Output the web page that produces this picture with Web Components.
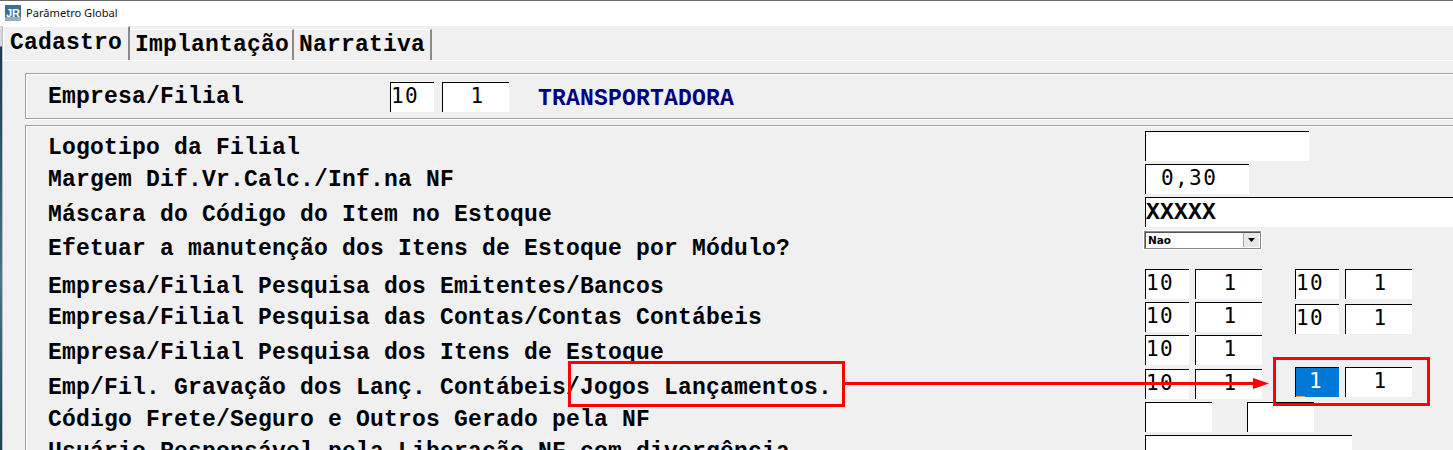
<!DOCTYPE html>
<html lang="pt">
<head>
<meta charset="utf-8">
<title>Parâmetro Global</title>
<style>
  html, body { margin: 0; height: 450px; overflow: hidden; background: #f0f0f0; }
  body { position: relative; font-family: "Liberation Mono", monospace; }
</style>
</head>
<body>

<param-window heading="Parâmetro Global">
  <tab-strip>
    <tab-item active style="width:127px">Cadastro</tab-item>
    <tab-item style="width:164px">Implantação</tab-item>
    <tab-item style="width:138px">Narrativa</tab-item>
  </tab-strip>

  <group-box style="--box-top:12px;--box-h:46px">
    <form-row label="Empresa/Filial" style="--row-h:36px;--col:342px;--field-top:8px;--label-top:12px">
      <text-field w="44" align="left">10</text-field>
      <text-field w="67" gap="8">1</text-field>
      <span style="margin-left:29px;margin-top:6px;color:#000080;font:bold 23px/1 'Liberation Mono',monospace;letter-spacing:.2px">TRANSPORTADORA</span>
    </form-row>
  </group-box>

  <group-box style="--box-top:6px;--box-h:340px">
    <form-row label="Logotipo da Filial" style="--row-h:33px;--label-top:11px;--field-top:5px">
      <text-field w="164"></text-field>
    </form-row>
    <form-row label="Margem Dif.Vr.Calc./Inf.na NF" style="--row-h:33px;--label-top:10px;--field-top:5px">
      <text-field w="104" pad="15">0,30</text-field>
    </form-row>
    <form-row label="Máscara do Código do Item no Estoque" style="--row-h:34px;--label-top:12px;--field-top:5px">
      <text-field w="320" align="left" bold>XXXXX</text-field>
    </form-row>
    <form-row label="Efetuar a manutenção dos Itens de Estoque por Módulo?" style="--row-h:38px;--label-top:12px;--field-top:4px">
      <combo-box>Nao</combo-box>
    </form-row>
    <form-row label="Empresa/Filial Pesquisa dos Emitentes/Bancos" style="--row-h:33px;--label-top:12px;--field-top:5px">
      <text-field w="44" align="left">10</text-field>
      <text-field w="67" gap="6">1</text-field>
      <text-field w="44" gap="33" align="left">10</text-field>
      <text-field w="67" gap="6">1</text-field>
    </form-row>
    <form-row label="Empresa/Filial Pesquisa das Contas/Contas Contábeis" style="--row-h:33px;--label-top:10px;--field-top:5px">
      <text-field w="44" align="left">10</text-field>
      <text-field w="67" gap="6">1</text-field>
      <text-field w="44" gap="33" drop="2" align="left">10</text-field>
      <text-field w="67" gap="6" drop="2">1</text-field>
    </form-row>
    <form-row label="Empresa/Filial Pesquisa dos Itens de Estoque" style="--row-h:34px;--label-top:12px;--field-top:5px">
      <text-field w="44" align="left">10</text-field>
      <text-field w="67" gap="6">1</text-field>
    </form-row>
    <form-row label="Emp/Fil. Gravação dos Lanç. Contábeis/Jogos Lançamentos." style="--row-h:33px;--label-top:13px;--field-top:5px">
      <text-field w="44" align="left">10</text-field>
      <text-field w="67" gap="6">1</text-field>
      <text-field w="44" gap="33" drop="-2" selected>1</text-field>
      <text-field w="67" gap="6" drop="-2">1</text-field>
    </form-row>
    <form-row label="Código Frete/Seguro e Outros Gerado pela NF" style="--row-h:33px;--label-top:12px;--field-top:5px">
      <text-field w="67"></text-field>
      <text-field w="67" gap="35"></text-field>
    </form-row>
    <form-row label="Usuário Responsável pela Liberação NF com divergência" style="--row-h:33px;--label-top:11px;--field-top:5px">
      <text-field w="207"></text-field>
    </form-row>
  </group-box>
</param-window>

<red-callout></red-callout>

<script>
class ParamWindow extends HTMLElement {
  connectedCallback() {
    this.attachShadow({ mode: 'open' });
    const heading = this.getAttribute('heading') || '';
    this.shadowRoot.innerHTML = `
      <style>
        :host { display: block; height: 450px; overflow: hidden; background: #f0f0f0; border-top: 1px solid #6b6b6b; box-sizing: border-box; position: relative; }
        .titlebar { box-sizing: border-box; height: 25px; padding: 0 0 2px 5px; background: #fff; display: flex; align-items: center; gap: 5px; font: 11.1px/1 "Noto Sans", "Open Sans", sans-serif; color: #111; }
        .logo { width: 16px; height: 16px; flex: none; display: block; }
        .edge { position: absolute; left: 0; top: 25px; bottom: 0; width: 2px; background: linear-gradient(#d8d8d8 0, #d8d8d8 20px, #1d3a4c 21px, #4b7486 60%, #20404f); }
        .edge-line { position: absolute; left: 2px; top: 25px; bottom: 0; width: 1px; background: #bdbdbd; }
        .content { padding-left: 25px; }
      </style>
      <div class="titlebar">
        <svg class="logo" viewBox="0 0 16 16">
          <rect width="16" height="16" fill="#3f6f8c"/>
          <rect y="12" width="16" height="4" fill="#8fb0c2"/>
          <text x="8" y="11.5" text-anchor="middle" font-family="Liberation Sans, sans-serif" font-weight="bold" font-size="11" fill="#fff">JR</text>
        </svg>
        <span>${heading}</span>
      </div>
      <div class="edge"></div><div class="edge-line"></div>
      <div class="content"><slot></slot></div>
    `;
  }
}

class TabStrip extends HTMLElement {
  connectedCallback() {
    this.attachShadow({ mode: 'open' });
    this.shadowRoot.innerHTML = `
      <style>
        :host { display: flex; align-items: flex-end; height: 34px; margin-left: -22px; border-bottom: 1px solid #fff; }
      </style>
      <slot></slot>
    `;
  }
}

class TabItem extends HTMLElement {
  connectedCallback() {
    this.attachShadow({ mode: 'open' });
    this.shadowRoot.innerHTML = `
      <style>
        :host { display: block; flex: none; box-sizing: border-box; height: 31px; padding: 4px 0 0 5px; font: bold 23px/1 "Liberation Mono", monospace; letter-spacing: .2px; color: #000; white-space: nowrap; background: #f0f0f0; border-top: 1px solid #fff; border-right: 2px solid #8a8a8a; }
        :host([active]) { height: 34px; padding: 5px 0 0 6px; border-left: 1px solid #fff; }
      </style>
      <slot></slot>
    `;
  }
}

class GroupBox extends HTMLElement {
  connectedCallback() {
    this.attachShadow({ mode: 'open' });
    this.shadowRoot.innerHTML = `
      <style>
        :host { display: block; box-sizing: border-box; margin-top: var(--box-top); height: var(--box-h); border: 1px solid #a0a0a0; border-right: 0; box-shadow: inset 1px 1px 0 #fff, 0 1px 0 #fff; }
      </style>
      <slot></slot>
    `;
  }
}

class FormRow extends HTMLElement {
  connectedCallback() {
    this.attachShadow({ mode: 'open' });
    const label = this.getAttribute('label') || '';
    this.shadowRoot.innerHTML = `
      <style>
        :host { display: grid; grid-template-columns: var(--col, 1097px) 1fr; height: var(--row-h); padding-left: 22px; }
        .label { margin-top: var(--label-top, 8px); font: bold 23px/1 "Liberation Mono", monospace; letter-spacing: .2px; color: #000; white-space: nowrap; }
        .fields { display: flex; align-items: flex-start; margin-top: var(--field-top, 5px); }
      </style>
      <div class="label">${label}</div>
      <div class="fields"><slot></slot></div>
    `;
  }
}

class TextField extends HTMLElement {
  connectedCallback() {
    this.attachShadow({ mode: 'open' });
    const w = this.getAttribute('w') || 44;
    const gap = this.getAttribute('gap') || 0;
    const drop = this.getAttribute('drop') || 0;
    const pad = this.getAttribute('pad');
    const align = pad ? 'left' : (this.getAttribute('align') || 'center');
    const left = pad || (align === 'left' ? 0 : 3);
    this.shadowRoot.innerHTML = `
      <style>
        :host { display: block; flex: none; box-sizing: border-box; position: relative; width: ${w}px; height: 30px; margin-left: ${gap}px; margin-top: ${drop}px; background: #fff; border-top: 1px solid #000; border-left: 1px solid #000; padding: 2px 0 0 ${left}px; text-align: ${align}; font: 21px/1.1 "DejaVu Sans Mono", monospace; letter-spacing: 1.4px; color: #000; overflow: hidden; white-space: nowrap; }
        :host([bold]) { font: bold 23px/1.05 "Liberation Mono", monospace; letter-spacing: .2px; padding: 3px 0 0; }
        :host([selected]) { background: #0078d7; color: #fff; padding: 2px 3px 0 0; }
        :host([selected])::after { content: ""; position: absolute; left: 0; bottom: 0; width: 9px; height: 1px; background: #e8a060; }
      </style>
      <slot></slot>
    `;
  }
}

class ComboBox extends HTMLElement {
  connectedCallback() {
    this.attachShadow({ mode: 'open' });
    this.shadowRoot.innerHTML = `
      <style>
        :host { display: flex; box-sizing: border-box; width: 119px; height: 20px; margin-left: -2px; background: #fff; border: 1px solid #fff; box-shadow: inset 1px 1px 0 #8a8a8a, inset -1px -1px 0 #8a8a8a, inset 2px 2px 0 #555; padding: 2px 2px 2px 4px; justify-content: space-between; font: bold 10.5px/14px "DejaVu Sans", sans-serif; color: #000; }
        .btn { width: 15px; height: 14px; background: #e8e8e8; border-left: 1px solid #aaa; display: flex; align-items: center; justify-content: center; }
        svg { width: 7px; height: 4px; display: block; }
      </style>
      <span><slot></slot></span>
      <span class="btn"><svg viewBox="0 0 7 4"><path d="M0 0h7L3.5 4z" fill="#000"/></svg></span>
    `;
  }
}

// red annotations lie over the form
class RedCallout extends HTMLElement {
  connectedCallback() {
    this.attachShadow({ mode: 'open' });
    this.shadowRoot.innerHTML = `
      <style>
        :host { position: absolute; left: 0; top: 0; width: 1453px; height: 450px; pointer-events: none; }
        svg { display: block; }
      </style>
      <svg width="1453" height="450" viewBox="0 0 1453 450" fill="none" stroke="#f00" stroke-width="3">
        <rect x="569.5" y="362.5" width="274" height="43"/>
        <rect x="1274.5" y="358.5" width="154" height="46"/>
        <path d="M845 383.5H1255"/>
        <path d="M1253 378L1269 383.5L1253 389z" fill="#f00" stroke="none"/>
      </svg>
    `;
  }
}

customElements.define('param-window', ParamWindow);
customElements.define('tab-strip', TabStrip);
customElements.define('tab-item', TabItem);
customElements.define('group-box', GroupBox);
customElements.define('form-row', FormRow);
customElements.define('text-field', TextField);
customElements.define('combo-box', ComboBox);
customElements.define('red-callout', RedCallout);
</script>
</body>
</html>
